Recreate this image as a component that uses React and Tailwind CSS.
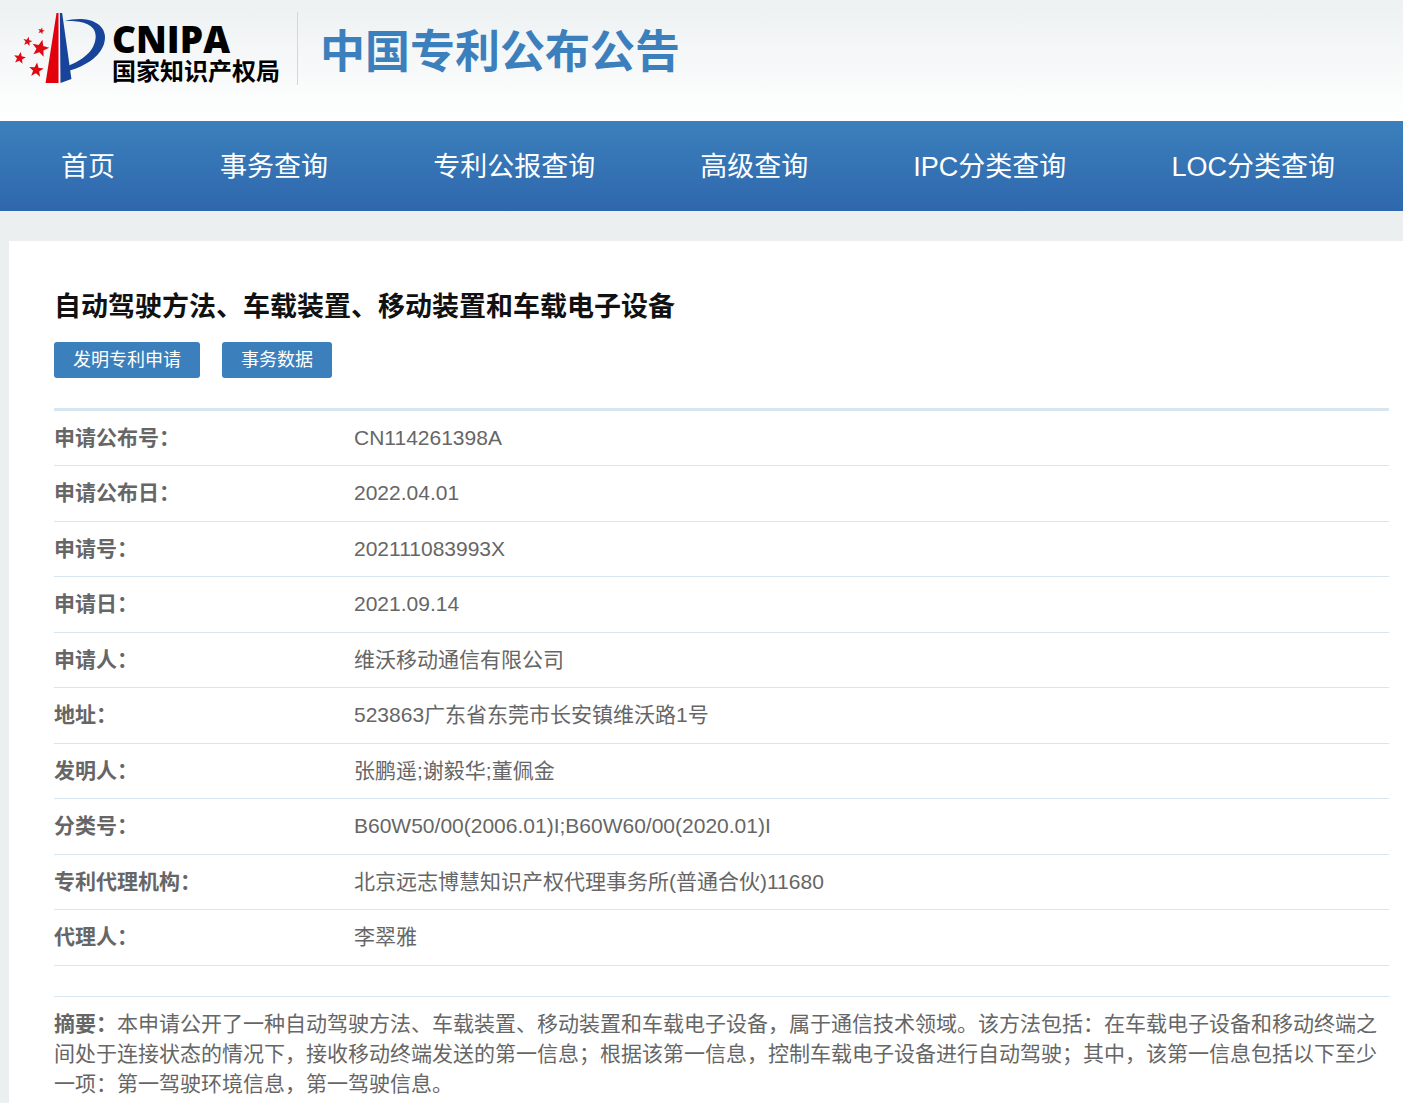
const navItems = ['首页', '事务查询', '专利公报查询', '高级查询', 'IPC分类查询', 'LOC分类查询'];

const details = [
  ['申请公布号：', 'CN114261398A'],
  ['申请公布日：', '2022.04.01'],
  ['申请号：', '202111083993X'],
  ['申请日：', '2021.09.14'],
  ['申请人：', '维沃移动通信有限公司'],
  ['地址：', '523863广东省东莞市长安镇维沃路1号'],
  ['发明人：', '张鹏遥;谢毅华;董佩金'],
  ['分类号：', 'B60W50/00(2006.01)I;B60W60/00(2020.01)I'],
  ['专利代理机构：', '北京远志博慧知识产权代理事务所(普通合伙)11680'],
  ['代理人：', '李翠雅'],
];

const STAR = 'M0 -10 L2.6 -3.4 L9.5 -3.1 L4 1.4 L5.9 8.1 L0 4.2 L-5.9 8.1 L-4 1.4 L-9.5 -3.1 L-2.6 -3.4 Z';

const stars = [
  [125, 93, 1.05, 15],
  [84, 125, 1.45, 12],
  [122, 146, 2.7, 14],
  [60, 175, 1.9, 10],
  [110, 211, 2.3, 6],
];

function Emblem() {
  return (
    <svg viewBox="40 36 280 220" className="h-[73px] w-[93px] shrink-0" aria-hidden="true">
      {stars.map(([x, y, s, r]) => (
        <path key={x} d={STAR} fill="#e00a12" transform={`translate(${x} ${y}) rotate(${r}) scale(${s})`} />
      ))}
      <path d="M171 39 H177 V250 H138 Z" fill="#e1000b" />
      <path d="M181 39 H188 L216 238 L183 250 Z" fill="#17439b" />
      <path
        d="M194 64 C247 47 313 60 317 108 C320 156 270 196 210 212 L208 197 C257 177 289 148 289 108 C288 70 241 61 194 64 Z"
        fill="#17439b"
      />
    </svg>
  );
}

export default function App() {
  return (
    <div lang="zh-CN" className="flex min-h-screen flex-col bg-[#ebeff0] font-['Liberation_Sans','Noto_Sans_CJK_SC',sans-serif] text-[#666]">
      <header className="flex h-[121px] items-start bg-linear-to-b from-[#edf1f2] to-white pl-[13px] pt-3">
        <a href="#" className="flex shrink-0 text-black">
          <Emblem />
          <span className="flex w-[192px] flex-col border-r border-[#d4d6d8] pl-[6px] pt-2">
            <span className="font-['Open_Sans',sans-serif] text-[37px] leading-[38px] font-extrabold">CNIPA</span>
            <span className="text-[24px] leading-[27px] font-bold whitespace-nowrap">国家知识产权局</span>
          </span>
        </a>
        <h1 className="pl-[22px] pt-[9px] text-[45px] leading-[64px] font-bold whitespace-nowrap text-[#3b80bd]">中国专利公布公告</h1>
      </header>

      <nav className="flex h-[90px] items-center justify-between bg-linear-to-b from-[#3b80bc] to-[#2f67ad] pl-[61px] pr-[68px] pt-0.5 text-[27px] leading-[40px] text-white">
        {navItems.map((item) => (
          <a key={item} href="#" className="whitespace-nowrap">
            {item}
          </a>
        ))}
      </nav>

      <main className="mt-[30px] ml-[9px] grow bg-white pt-[46px] pr-[14px] pl-[45px]">
        <h2 className="text-[27px] leading-[40px] font-bold text-[#111]">自动驾驶方法、车载装置、移动装置和车载电子设备</h2>
        <div className="mt-[15px] flex gap-[22px] text-[18px] leading-[36px] text-white">
          <button type="button" className="h-9 rounded-[3px] bg-[#3b80bc] px-[19px]">发明专利申请</button>
          <button type="button" className="h-9 rounded-[3px] bg-[#3b80bc] px-[19px]">事务数据</button>
        </div>

        <div className="mt-[30px] border-t-[3px] border-[#d8e6f1]">
          <table className="w-full border-separate border-spacing-0 text-left text-[21px] leading-[30px]">
            <tbody>
              {details.map(([label, value]) => (
                <tr key={label} className="align-top odd:h-[55px] even:h-[56px]">
                  <th scope="row" className="w-[300px] border-b border-[#d8e6f1] pt-3 font-bold">{label}</th>
                  <td className="border-b border-[#d8e6f1] pt-3">{value}</td>
                </tr>
              ))}
            </tbody>
          </table>
        </div>

        <p className="mt-[30px] border-t border-[#d8e6f1] pt-3 text-[21px] leading-[30px]">
          <b>摘要：</b>
          本申请公开了一种自动驾驶方法、车载装置、移动装置和车载电子设备，属于通信技术领域。该方法包括：在车载电子设备和移动终端之间处于连接状态的情况下，接收移动终端发送的第一信息；根据该第一信息，控制车载电子设备进行自动驾驶；其中，该第一信息包括以下至少一项：第一驾驶环境信息，第一驾驶信息。
        </p>
      </main>
    </div>
  );
}
